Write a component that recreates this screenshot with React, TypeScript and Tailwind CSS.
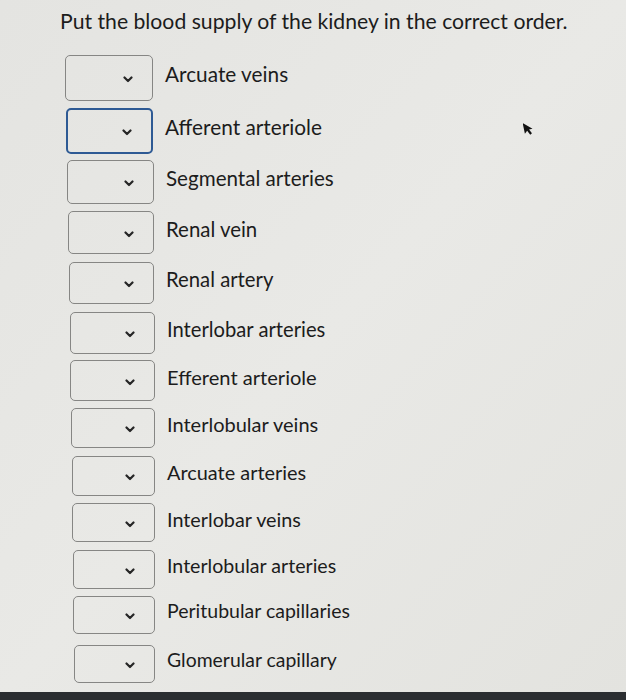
import React from "react";

type Row = { label: string; box: string; text: string; focused?: boolean };

// Rows sit a little lower, further right and smaller as we go down (photo of a screen)
const rows: Row[] = [
  { label: "Arcuate veins", box: "mt-[0px] ml-[65px] h-[46px] w-[88px]", text: "text-[20.8px]" },
  { label: "Afferent arteriole", box: "mt-[7px] ml-[66px] h-[46px] w-[87px]", text: "text-[20.8px]", focused: true },
  { label: "Segmental arteries", box: "mt-[6px] ml-[67px] h-[44px] w-[87px]", text: "text-[20.6px]" },
  { label: "Renal vein", box: "mt-[7px] ml-[68px] h-[43px] w-[86px]", text: "text-[20.4px]" },
  { label: "Renal artery", box: "mt-[8px] ml-[69px] h-[42px] w-[85px]", text: "text-[20.3px]" },
  { label: "Interlobar arteries", box: "mt-[8px] ml-[70px] h-[42px] w-[85px]", text: "text-[20.2px]" },
  { label: "Efferent arteriole", box: "mt-[6px] ml-[70px] h-[41px] w-[85px]", text: "text-[20.1px]" },
  { label: "Interlobular veins", box: "mt-[7px] ml-[71px] h-[40px] w-[84px]", text: "text-[20px]" },
  { label: "Arcuate arteries", box: "mt-[8px] ml-[72px] h-[40px] w-[83px]", text: "text-[19.9px]" },
  { label: "Interlobar veins", box: "mt-[7px] ml-[72px] h-[39px] w-[83px]", text: "text-[19.8px]" },
  { label: "Interlobular arteries", box: "mt-[8px] ml-[73px] h-[39px] w-[82px]", text: "text-[19.6px]" },
  { label: "Peritubular capillaries", box: "mt-[7px] ml-[73px] h-[38px] w-[82px]", text: "text-[19.5px]" },
  { label: "Glomerular capillary", box: "mt-[11px] ml-[74px] h-[38px] w-[81px]", text: "text-[19.4px]" },
];

function Chevron() {
  return (
    <svg width="10" height="7" viewBox="0 0 10 7" fill="none" stroke="#262626" strokeWidth="2.2" strokeLinecap="round" strokeLinejoin="round">
      <path d="M1.5 1.5 L5 5 L8.5 1.5" />
    </svg>
  );
}

export default function App() {
  return (
    <div
      className="relative w-[626px] h-[700px] overflow-hidden bg-gradient-to-br from-[#e4e4e1] via-[#e9e9e6] to-[#e3e3df] text-[#1c1c1c] flex flex-col"
      style={{ fontFamily: "Lato, 'Open Sans', sans-serif" }}
    >
      <h1 className="pl-[60px] pt-[7px] text-[21.2px] leading-[28px] font-normal">
        Put the blood supply of the kidney in the correct order.
      </h1>

      <div className="flex flex-col mt-[20px] flex-1">
        {rows.map((r) => (
          <div key={r.label} className={`flex items-center ${r.box.split(" ")[0]}`}>
            <div
              className={`${r.box.split(" ").slice(1).join(" ")} shrink-0 rounded-[5px] flex items-center justify-end pr-[19px] pt-[3px] ${
                r.focused ? "border-2 border-[#2e5a94]" : "border border-[#868684]"
              }`}
            >
              <Chevron />
            </div>
            <span className={`ml-[12px] ${r.text} leading-[26px] -mt-[8px]`}>{r.label}</span>
          </div>
        ))}
      </div>

      <div className="h-[8px] bg-[#2b2e31] shrink-0" />

      {/* mouse pointer */}
      <svg className="absolute left-[523px] top-[121px]" width="12" height="16" viewBox="0 0 12 16">
        <path d="M1 1 L1 12 L3.8 9.6 L6 14 L8 13 L5.9 8.8 L9.5 8.6 Z" fill="#111" transform="rotate(-12 5 8)" />
      </svg>
    </div>
  );
}
